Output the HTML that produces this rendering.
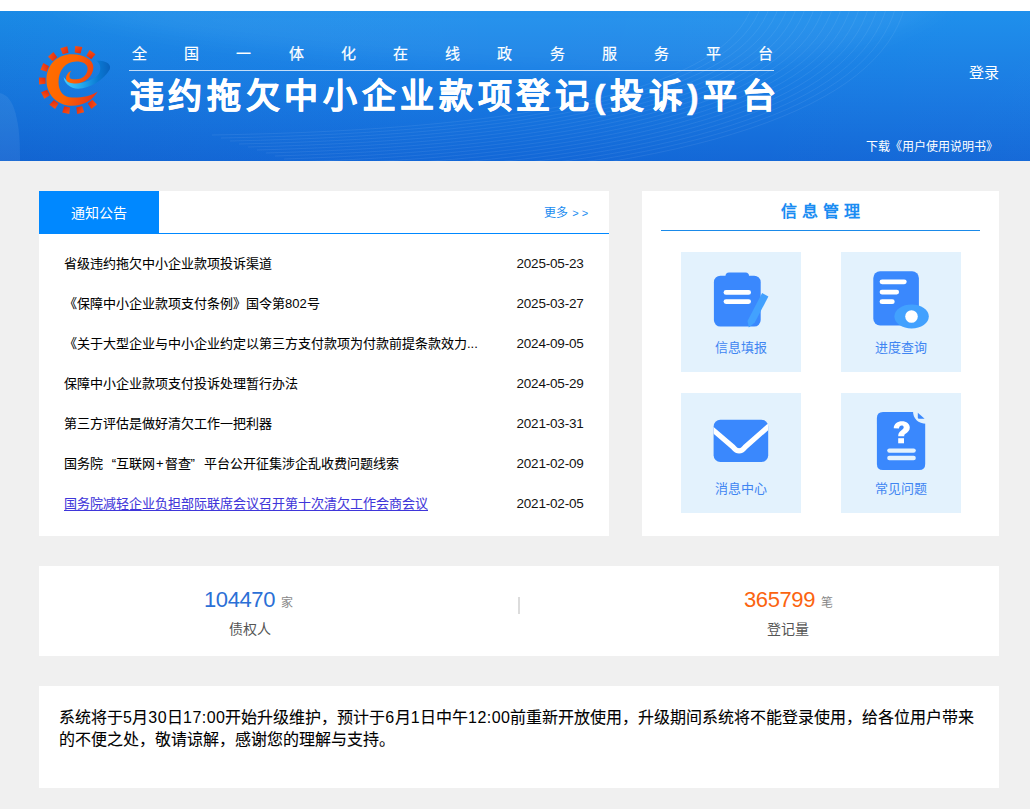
<!DOCTYPE html>
<html lang="zh-CN"><head><meta charset="utf-8">
<style>
*{margin:0;padding:0;box-sizing:border-box}
html,body{width:1030px;height:809px;overflow:hidden;background:#f0f0f0;font-family:"Liberation Sans",sans-serif;color:#222}
.abs{position:absolute}
#top{position:absolute;left:0;top:0;width:1030px;height:11px;background:#fff}
#banner{position:absolute;left:0;top:11px;width:1030px;height:150px;overflow:hidden;
 background:linear-gradient(180deg,#1b8eec 0%,#1779e2 55%,#1267d7 100%)}
.sub{position:absolute;left:132px;top:33px;font-size:15px;color:#fff;-webkit-text-stroke:0.2px #fff;letter-spacing:37.2px;white-space:nowrap;line-height:20px}
.hline{position:absolute;left:129px;top:59px;width:645px;height:1px;background:rgba(255,255,255,.75)}
.title{position:absolute;left:129.5px;top:64.5px;font-size:34px;font-weight:bold;color:#fff;letter-spacing:4.7px;-webkit-text-stroke:0.5px #fff;white-space:nowrap;line-height:40px}
.login{position:absolute;left:969px;top:52px;font-size:15px;color:#fff;line-height:20px}
.manual{position:absolute;left:866px;top:127px;font-size:12px;color:#fff;line-height:18px;white-space:nowrap}

.panel{position:absolute;background:#fff}
#news{left:39px;top:191px;width:570px;height:345px}
#news .tab{position:absolute;left:0;top:0;width:120px;height:42px;background:#0088ff;color:#fff;font-size:14px;line-height:44px;text-align:center;overflow:hidden}
#news .hd{position:absolute;left:0;top:42px;width:570px;height:1px;background:#0088ff}
#news .more{position:absolute;left:505px;top:14px;font-size:12px;color:#1a8cf0;line-height:16px;letter-spacing:0px}
.row{position:absolute;left:25px;width:520px;height:20px;font-size:13px;line-height:20px;color:#000;-webkit-text-stroke:0.08px #000;white-space:nowrap}
.row .t{position:absolute;left:0;top:0}
.row .d{position:absolute;left:452.5px;top:0;-webkit-text-stroke:0;color:#111;font-size:13.5px;letter-spacing:-0.2px}
.ns{-webkit-text-stroke:0}
.ql,.qr{display:inline-block;width:13px}.ql{text-align:right}.qr{text-align:left}
.row a{color:#3f36da;-webkit-text-stroke:0.08px #3f36da;text-underline-offset:1.5px;text-decoration:underline}

#info{left:642px;top:191px;width:357px;height:345px}
#info .ttl{position:absolute;left:0;top:10px;width:357px;text-align:center;font-size:16px;font-weight:bold;color:#1a8cf2;letter-spacing:5px;line-height:22px;padding-left:5px}
#info .ln{position:absolute;left:19px;top:39px;width:319px;height:1px;background:#1a8ae9}
.tile{position:absolute;width:120px;height:120px;background:#e3f2fd;overflow:hidden}
.tile .lb{position:absolute;left:0;top:87px;width:120px;text-align:center;font-size:13px;color:#3f85f2;line-height:18px}
.tile svg{position:absolute}

#stats{left:39px;top:566px;width:960px;height:90px}
.num{position:absolute;top:20px;font-size:22px;line-height:28px;white-space:nowrap;letter-spacing:-0.4px}
.unit{font-size:12px;color:#888;margin-left:6px;letter-spacing:0}
.cap{position:absolute;top:53px;font-size:14px;color:#555;line-height:20px;white-space:nowrap}
.sep{position:absolute;left:479px;top:31px;width:2px;height:17px;background:#dcdcdc}

#notice{left:39px;top:686px;width:960px;height:102px}
.dg{letter-spacing:0.45px;-webkit-text-stroke:0}
#notice p{position:absolute;left:20px;top:20.5px;width:920px;font-size:16px;line-height:22px;color:#000;-webkit-text-stroke:0.1px #000}
</style></head>
<body>
<div id="top"></div>
<div id="banner">
  <svg class="abs" style="left:0;top:0" width="1030" height="150" viewBox="0 0 1030 150">
<defs><linearGradient id="bgd" x1="0" y1="0" x2="1" y2="0"><stop offset="0" stop-color="#000" stop-opacity="0.03"/><stop offset="0.5" stop-color="#fff" stop-opacity="0"/><stop offset="1" stop-color="#fff" stop-opacity="0.02"/></linearGradient></defs>
<rect width="1030" height="150" fill="url(#bgd)"/>
<defs><filter id="bl" x="-20%" y="-50%" width="140%" height="200%"><feGaussianBlur stdDeviation="10"/></filter></defs><path d="M40,-10 C120,20 300,50 620,62 C760,66 880,40 950,-10Z" fill="#fff" fill-opacity="0.05" filter="url(#bl)"/>
<path d="M-5,81.5 C6,81 12,89 15.5,102 C18.5,114 20,124 20,150 L-5,150Z" fill="#fff" fill-opacity="0.07"/>
<g fill="none" stroke="#fff" stroke-opacity="0.07" stroke-width="1"><path d="M905,-5 Q865,150 365,175"/><path d="M896,-5 Q856,148 356,172"/><path d="M887,-5 Q847,146 347,169"/><path d="M878,-5 Q838,144 338,166"/><path d="M869,-5 Q829,142 329,163"/><path d="M860,-5 Q820,140 320,160"/><path d="M851,-5 Q811,138 311,157"/><path d="M842,-5 Q802,136 302,154"/><path d="M833,-5 Q793,134 293,151"/><path d="M824,-5 Q784,132 284,148"/><path d="M815,-5 Q775,130 275,145"/><path d="M806,-5 Q766,128 266,142"/><path d="M797,-5 Q757,126 257,139"/><path d="M788,-5 Q748,124 248,136"/><path d="M779,-5 Q739,122 239,133"/><path d="M770,-5 Q730,120 230,130"/><path d="M761,-5 Q721,118 221,127"/><path d="M752,-5 Q712,116 212,124"/></g>
</svg>
<svg class="abs" style="left:35px;top:29px" width="80" height="80" viewBox="35 40 80 80">
<defs>
<linearGradient id="og" x1="0" y1="0.2" x2="1" y2="0.5"><stop offset="0" stop-color="#ff6e00"/><stop offset="0.5" stop-color="#ff6400"/><stop offset="1" stop-color="#ea3a16"/></linearGradient>
<linearGradient id="sw" x1="0" y1="0" x2="1" y2="0"><stop offset="0" stop-color="#45cdfb"/><stop offset="0.4" stop-color="#22a8ec"/><stop offset="0.75" stop-color="#0a78d2"/><stop offset="1" stop-color="#0862be"/></linearGradient>
<linearGradient id="sq" x1="0" y1="0" x2="1" y2="1"><stop offset="0" stop-color="#fa5312"/><stop offset="1" stop-color="#e0280f"/></linearGradient>
</defs>
<g fill="url(#sq)"><path d="M-3,3.2 L3,3.2 L3.6,-3.3 L-3.6,-3.3Z" transform="translate(90.65,54.88) rotate(35.1)"/><path d="M-3,3.2 L3,3.2 L3.6,-3.3 L-3.6,-3.3Z" transform="translate(78.20,49.74) rotate(9.8)"/><path d="M-3,3.2 L3,3.2 L3.6,-3.3 L-3.6,-3.3Z" transform="translate(64.74,50.43) rotate(-15.6)"/><path d="M-3,3.2 L3,3.2 L3.6,-3.3 L-3.6,-3.3Z" transform="translate(52.88,56.81) rotate(-41.0)"/><path d="M-3,3.2 L3,3.2 L3.6,-3.3 L-3.6,-3.3Z" transform="translate(44.89,67.66) rotate(-66.3)"/><path d="M-3,3.2 L3,3.2 L3.6,-3.3 L-3.6,-3.3Z" transform="translate(42.31,80.88) rotate(-91.7)"/><path d="M-3,3.2 L3,3.2 L3.6,-3.3 L-3.6,-3.3Z" transform="translate(45.65,93.94) rotate(-117.0)"/><path d="M-3,3.2 L3,3.2 L3.6,-3.3 L-3.6,-3.3Z" transform="translate(54.25,104.31) rotate(-142.4)"/><path d="M-3,3.2 L3,3.2 L3.6,-3.3 L-3.6,-3.3Z" transform="translate(66.46,110.00) rotate(-167.7)"/><path d="M-3,3.2 L3,3.2 L3.6,-3.3 L-3.6,-3.3Z" transform="translate(79.93,109.91) rotate(-193.1)"/><path d="M-3,3.2 L3,3.2 L3.6,-3.3 L-3.6,-3.3Z" transform="translate(92.07,104.06) rotate(-218.4)"/></g>
<path fill="url(#sw)" d="M63.7,77.1 C64,83 70,88.8 78.3,88.8 C90,88.5 104,80 109.7,69.6 C111.5,65 108,60.5 96,60.5 C100.5,63.5 101.5,69 98.8,74 C95,78.5 86,83 78.3,83 C72,83 66,81.5 63.7,77.1 Z"/>
<path fill="url(#og)" d="M97.7,91.4 C93,99.5 85,105.2 72,105.8 C58,106 46.4,95 46.4,80 C46.5,64 58,54.3 72,54.3 C84,54.3 93.4,60 93.4,67 C93.4,77 84,83.5 76,83.5 C71,83.5 66.5,82.5 66,79 C65.8,75 68.5,72 71.3,70.4 C69.8,72.5 69,75.5 69.8,78 C71,79.8 78,79.5 81.2,78.3 C85,76.5 87.6,73 87.6,68.5 C87.6,64 83,61.4 76,61.4 C66,61.4 58.5,70 58.5,82 C58.5,92 64,97.3 72,97.5 C82,97.8 91,96 97.7,91.4 Z"/>
</svg>
  <div class="sub">全国一体化在线政务服务平台</div>
  <div class="hline"></div>
  <div class="title">违约拖欠中小企业款项登记(投诉)平台</div>
  <div class="login">登录</div>
  <div class="manual">下载《用户使用说明书》</div>
</div>

<div id="news" class="panel">
  <div class="tab">通知公告</div>
  <div class="hd"></div>
  <div class="more">更多 <span style="font-size:11px;letter-spacing:3px;margin-left:1px">&gt;&gt;</span></div>
  <div class="row" style="top:63px"><span class="t">省级违约拖欠中小企业款项投诉渠道</span><span class="d">2025-05-23</span></div>
  <div class="row" style="top:103px"><span class="t">《保障中小企业款项支付条例》国令第<span class="ns">802</span>号</span><span class="d">2025-03-27</span></div>
  <div class="row" style="top:143px"><span class="t">《关于大型企业与中小企业约定以第三方支付款项为付款前提条款效力<span class="ns">...</span></span><span class="d">2024-09-05</span></div>
  <div class="row" style="top:183px"><span class="t">保障中小企业款项支付投诉处理暂行办法</span><span class="d">2024-05-29</span></div>
  <div class="row" style="top:223px"><span class="t">第三方评估是做好清欠工作一把利器</span><span class="d">2021-03-31</span></div>
  <div class="row" style="top:263px"><span class="t">国务院<span class="ql">“</span>互联网<span style="margin:0 1px">+</span>督查<span class="qr">”</span>平台公开征集涉企乱收费问题线索</span><span class="d">2021-02-09</span></div>
  <div class="row" style="top:303px"><span class="t"><a>国务院减轻企业负担部际联席会议召开第十次清欠工作会商会议</a></span><span class="d">2021-02-05</span></div>
</div>

<div id="info" class="panel">
  <div class="ttl">信息管理</div>
  <div class="ln"></div>
  <div class="tile" style="left:39px;top:61px"><svg width="120" height="120" style="left:0;top:0"><rect x="44.5" y="20.5" width="23.5" height="8" rx="3.5" fill="#3a88fd"/><rect x="32.9" y="23.7" width="46.8" height="50.9" rx="6.5" fill="#3a88fd"/><rect x="42.6" y="38" width="27.4" height="4.8" rx="2.4" fill="#fff"/><rect x="42.6" y="47.2" width="27.4" height="4.8" rx="2.4" fill="#fff"/><path d="M81.1,41.1 L87.4,44.4 L73.8,70.4 L67.8,75.6 L66.5,69 Z" fill="#42a1fe"/></svg><div class="lb">信息填报</div></div>
  <div class="tile" style="left:199px;top:61px"><svg width="120" height="120" style="left:0;top:0"><rect x="32.3" y="19.3" width="45.6" height="54.1" rx="6.8" fill="#3a88fd"/><rect x="38.6" y="27.4" width="27.1" height="4.9" rx="2.45" fill="#fff"/><rect x="38.6" y="37.8" width="19.5" height="4.6" rx="2.3" fill="#fff"/><rect x="38.6" y="47.2" width="15.1" height="4.9" rx="2.45" fill="#fff"/><ellipse cx="70.6" cy="64.5" rx="17.2" ry="11.9" fill="#42a1fe"/><circle cx="70.5" cy="64.5" r="6.3" fill="#fff"/></svg><div class="lb">进度查询</div></div>
  <div class="tile" style="left:39px;top:202px"><svg width="120" height="120" style="left:0;top:0"><defs><clipPath id="envc"><rect x="32.6" y="26.7" width="54.6" height="42.3" rx="6.7"/></clipPath></defs><rect x="32.6" y="26.7" width="54.6" height="42.3" rx="6.7" fill="#3a88fd"/><path clip-path="url(#envc)" d="M30,35.2 L52.3,54.3 Q58.1,61.5 63.9,54.3 L90,31.2" fill="none" stroke="#fff" stroke-width="5.2" stroke-linejoin="round"/></svg><div class="lb">消息中心</div></div>
  <div class="tile" style="left:199px;top:202px"><svg width="120" height="120" style="left:0;top:0"><path d="M42,19 L73,19 L84.2,30.5 L84.2,71 Q84.2,77.1 78.2,77.1 L41.9,77.1 Q35.9,77.1 35.9,71 L35.9,25 Q35.9,19 42,19Z" fill="#3a88fd"/><path d="M72,18 C72,25.5 77,30.8 85.5,30.8 L85.5,18Z" fill="#e3f2fd"/><path d="M76.8,19.7 L83.6,25.8 L78,25.8 Q76.8,25.8 76.8,24.6Z" fill="#3a88fd"/><path d="M52.7,35.2 C53,30.5 56.5,28.2 61,28.2 C65.5,28.2 68.8,30.8 68.8,34.6 C68.8,37.8 66.5,39.5 64.5,40.8 C63.5,41.5 63.2,42.2 63.2,43.3 L57.2,43.3 C57.2,40.5 58,39 60.2,37.4 C62,36.1 62.7,35.4 62.7,34.3 C62.7,33 61.8,32.4 60.6,32.4 C59.2,32.4 58.2,33.3 57.9,35.6 Z" fill="#fff"/><rect x="57.2" y="45.2" width="5.8" height="5.1" fill="#fff"/><rect x="46.2" y="55.4" width="28.6" height="4.4" rx="2.2" fill="#e3f2fd"/><rect x="46.2" y="62.8" width="28.6" height="4.4" rx="2.2" fill="#e3f2fd"/></svg><div class="lb">常见问题</div></div>
</div>

<div id="stats" class="panel">
  <div class="num" style="left:165px;color:#2b6fd6">104470<span class="unit">家</span></div>
  <div class="cap" style="left:190px">债权人</div>
  <div class="sep"></div>
  <div class="num" style="left:705px;color:#fb6410">365799<span class="unit">笔</span></div>
  <div class="cap" style="left:728px">登记量</div>
</div>

<div id="notice" class="panel">
  <p>系统将于<span class="dg">5</span>月<span class="dg">30</span>日<span class="dg">17:00</span>开始升级维护，预计于<span class="dg">6</span>月<span class="dg">1</span>日中午<span class="dg">12:00</span>前重新开放使用，升级期间系统将不能登录使用，给各位用户带来的不便之处，敬请谅解，感谢您的理解与支持。</p>
</div>
</body></html>
